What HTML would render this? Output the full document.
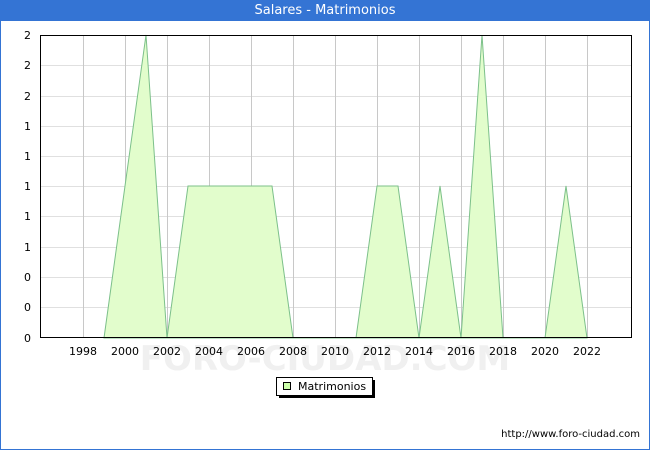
<!DOCTYPE html>
<html><head><style>
body{margin:0;width:650px;height:450px;overflow:hidden;font-family:"DejaVu Sans","Liberation Sans",sans-serif;}
.frame{position:absolute;left:0;top:0;width:648px;height:448px;border:1px solid #3474d4;background:#fff}
.title{position:absolute;left:0;top:0;width:650px;height:21px;background:#3474d4;color:#fff;font-size:13px;text-align:center;line-height:22px}
</style></head><body>
<div class="frame"></div>
<div class="title">Salares - Matrimonios</div>
<svg width="650" height="450" style="position:absolute;left:0;top:0" font-family="DejaVu Sans, Liberation Sans, sans-serif" font-size="11">
<g stroke="#e0e0e0" stroke-width="1">
<line x1="40" x2="632" y1="65.5" y2="65.5"/><line x1="40" x2="632" y1="96.5" y2="96.5"/><line x1="40" x2="632" y1="126.5" y2="126.5"/><line x1="40" x2="632" y1="156.5" y2="156.5"/><line x1="40" x2="632" y1="186.5" y2="186.5"/><line x1="40" x2="632" y1="216.5" y2="216.5"/><line x1="40" x2="632" y1="247.5" y2="247.5"/><line x1="40" x2="632" y1="277.5" y2="277.5"/><line x1="40" x2="632" y1="307.5" y2="307.5"/>
</g>
<g stroke="#c8c8c8" stroke-width="1">
<line x1="83.5" x2="83.5" y1="35" y2="338"/><line x1="125.5" x2="125.5" y1="35" y2="338"/><line x1="167.5" x2="167.5" y1="35" y2="338"/><line x1="209.5" x2="209.5" y1="35" y2="338"/><line x1="251.5" x2="251.5" y1="35" y2="338"/><line x1="293.5" x2="293.5" y1="35" y2="338"/><line x1="335.5" x2="335.5" y1="35" y2="338"/><line x1="377.5" x2="377.5" y1="35" y2="338"/><line x1="419.5" x2="419.5" y1="35" y2="338"/><line x1="461.5" x2="461.5" y1="35" y2="338"/><line x1="503.5" x2="503.5" y1="35" y2="338"/><line x1="545.5" x2="545.5" y1="35" y2="338"/><line x1="587.5" x2="587.5" y1="35" y2="338"/>
</g>
<text x="325" y="370" font-size="34" fill="#f0f0f0" text-anchor="middle" font-weight="bold">FORO-CIUDAD.COM</text>
<polygon fill="#e2fdcc" stroke="#7cc08a" stroke-width="1" points="104,338 125,186 146,35 167,338 188,186 209,186 230,186 251,186 272,186 293,338 356,338 377,186 398,186 419,338 440,186 461,338 482,35 503,338 545,338 566,186 587,338"/>
<rect x="40.5" y="35.5" width="591" height="302" fill="none" stroke="#000"/>
<g text-anchor="end" fill="#000">
<text x="31" y="39">2</text><text x="31" y="69">2</text><text x="31" y="100">2</text><text x="31" y="130">1</text><text x="31" y="160">1</text><text x="31" y="190">1</text><text x="31" y="220">1</text><text x="31" y="251">1</text><text x="31" y="281">0</text><text x="31" y="311">0</text><text x="31" y="342">0</text>
</g>
<g text-anchor="middle" fill="#000">
<text x="83" y="355">1998</text><text x="125" y="355">2000</text><text x="167" y="355">2002</text><text x="209" y="355">2004</text><text x="251" y="355">2006</text><text x="293" y="355">2008</text><text x="335" y="355">2010</text><text x="377" y="355">2012</text><text x="419" y="355">2014</text><text x="461" y="355">2016</text><text x="503" y="355">2018</text><text x="545" y="355">2020</text><text x="587" y="355">2022</text>
</g>
<rect x="279" y="380" width="96" height="18" fill="#000"/>
<rect x="276.5" y="377.5" width="96" height="18" fill="#fff" stroke="#000"/>
<rect x="283.5" y="382.5" width="7" height="7" fill="#ccffaa" stroke="#000"/>
<text x="298" y="390">Matrimonios</text>
<text x="640" y="437" text-anchor="end" font-size="10">http://www.foro-ciudad.com</text>
</svg>
</body></html>
